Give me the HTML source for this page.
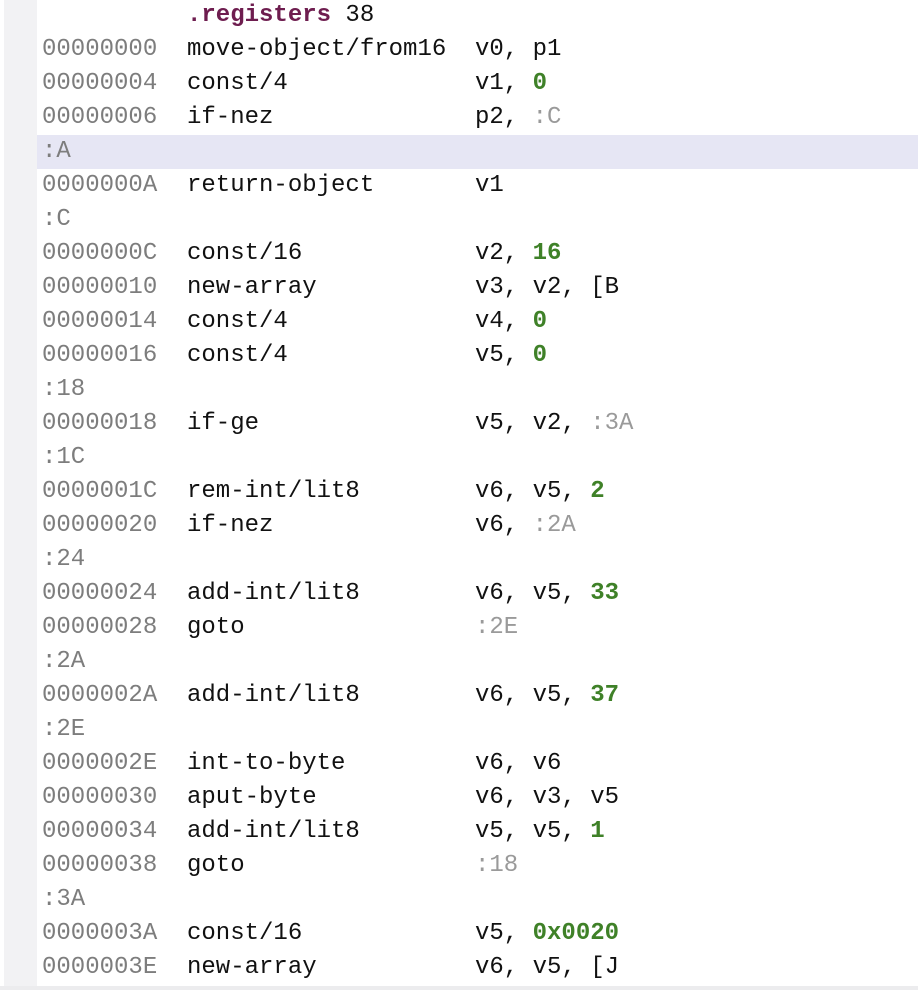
<!DOCTYPE html>
<html><head><meta charset="utf-8"><style>
html,body{margin:0;padding:0;width:918px;height:990px;overflow:hidden;background:#fff;}
body{position:relative;font-family:"Liberation Mono","DejaVu Sans Mono",monospace;font-size:24px;}
.gut{position:absolute;left:4px;top:0;width:33px;height:990px;background:#f2f2f4;}
.bot{position:absolute;left:0;top:986px;width:918px;height:4px;background:#ececee;}
.rows{position:absolute;left:0;top:-1px;width:918px;}
.r{height:34px;line-height:34px;position:relative;white-space:pre;color:#111;}
.r.hl{background:#e6e6f4;margin-left:37px;}
.r.hl .a{left:5px;}
.a{position:absolute;left:42px;color:#7d7d7d;}
.m{position:absolute;left:187px;}
.g{position:absolute;left:475px;}
.n{color:#3f8128;font-weight:bold;}
.l{color:#9a9a9a;}
.p{color:#6e1d4f;font-weight:bold;}
</style></head><body>
<div class="gut"></div>
<div class="rows">
<div class="r"><span class="m"><span class="p">.registers</span> 38</span></div>
<div class="r"><span class="a">00000000</span><span class="m">move-object/from16</span><span class="g">v0, p1</span></div>
<div class="r"><span class="a">00000004</span><span class="m">const/4</span><span class="g">v1, <span class="n">0</span></span></div>
<div class="r"><span class="a">00000006</span><span class="m">if-nez</span><span class="g">p2, <span class="l">:C</span></span></div>
<div class="r hl"><span class="a">:A</span></div>
<div class="r"><span class="a">0000000A</span><span class="m">return-object</span><span class="g">v1</span></div>
<div class="r"><span class="a">:C</span></div>
<div class="r"><span class="a">0000000C</span><span class="m">const/16</span><span class="g">v2, <span class="n">16</span></span></div>
<div class="r"><span class="a">00000010</span><span class="m">new-array</span><span class="g">v3, v2, [B</span></div>
<div class="r"><span class="a">00000014</span><span class="m">const/4</span><span class="g">v4, <span class="n">0</span></span></div>
<div class="r"><span class="a">00000016</span><span class="m">const/4</span><span class="g">v5, <span class="n">0</span></span></div>
<div class="r"><span class="a">:18</span></div>
<div class="r"><span class="a">00000018</span><span class="m">if-ge</span><span class="g">v5, v2, <span class="l">:3A</span></span></div>
<div class="r"><span class="a">:1C</span></div>
<div class="r"><span class="a">0000001C</span><span class="m">rem-int/lit8</span><span class="g">v6, v5, <span class="n">2</span></span></div>
<div class="r"><span class="a">00000020</span><span class="m">if-nez</span><span class="g">v6, <span class="l">:2A</span></span></div>
<div class="r"><span class="a">:24</span></div>
<div class="r"><span class="a">00000024</span><span class="m">add-int/lit8</span><span class="g">v6, v5, <span class="n">33</span></span></div>
<div class="r"><span class="a">00000028</span><span class="m">goto</span><span class="g"><span class="l">:2E</span></span></div>
<div class="r"><span class="a">:2A</span></div>
<div class="r"><span class="a">0000002A</span><span class="m">add-int/lit8</span><span class="g">v6, v5, <span class="n">37</span></span></div>
<div class="r"><span class="a">:2E</span></div>
<div class="r"><span class="a">0000002E</span><span class="m">int-to-byte</span><span class="g">v6, v6</span></div>
<div class="r"><span class="a">00000030</span><span class="m">aput-byte</span><span class="g">v6, v3, v5</span></div>
<div class="r"><span class="a">00000034</span><span class="m">add-int/lit8</span><span class="g">v5, v5, <span class="n">1</span></span></div>
<div class="r"><span class="a">00000038</span><span class="m">goto</span><span class="g"><span class="l">:18</span></span></div>
<div class="r"><span class="a">:3A</span></div>
<div class="r"><span class="a">0000003A</span><span class="m">const/16</span><span class="g">v5, <span class="n">0x0020</span></span></div>
<div class="r"><span class="a">0000003E</span><span class="m">new-array</span><span class="g">v6, v5, [J</span></div>
</div>
<div class="bot"></div>
</body></html>
